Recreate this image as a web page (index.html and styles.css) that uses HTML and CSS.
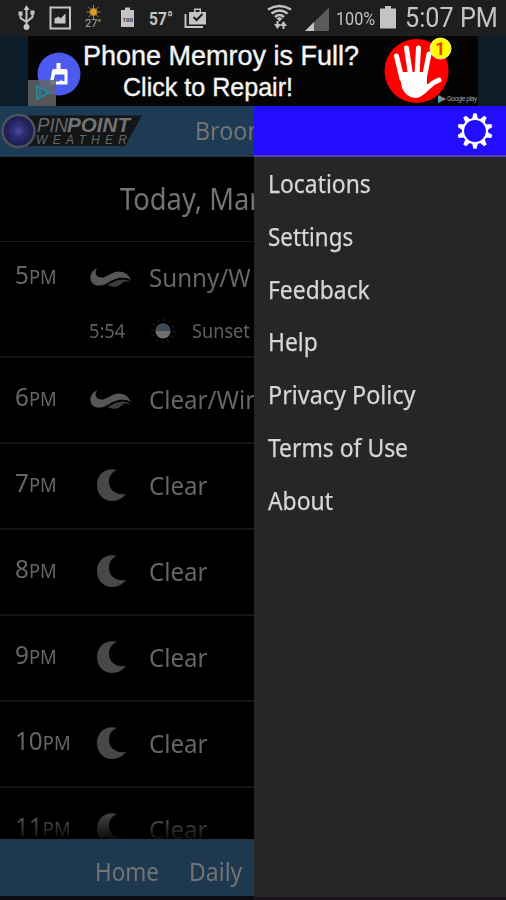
FILE: index.html
```html
<!DOCTYPE html>
<html lang="en">
<head>
<meta charset="utf-8">
<title>Pinpoint Weather</title>
<link rel="stylesheet" href="styles.css">
</head>
<body>
<svg width="0" height="0" class="defs">
  <defs>
    <symbol id="moon" viewBox="0 0 30 34"><path d="M21 2C10-1 1 6 1 17c0 10 7 16 15 16 6 0 11-3 14-7C19 28 12.500 21 13 13c0-5 3-9 8-11z" fill="#484848"/></symbol>
    <symbol id="wind" viewBox="0 0 44 22"><path d="M8.500 1C3 3 0 9 2 14c3 6 10 6 17 2 8-5 13-6 18-5 3 0 5 1 6 3-2-8-10-11-17-9-6 2-10 7-16 5-4-2-4-6-1.500-9z" fill="#575757"/><path d="M19 18c5-2 8-5 13-5 4-1 8 0 11 3-4-2-6-2-9 0-5 5-11 5-15 2z" fill="#3d3d3d"/></symbol>
  </defs>
</svg>
<div class="screen">
  <header class="status">
    <svg class="status-icons" width="220" height="36" viewBox="0 0 220 36" fill="none" stroke="#c4c4c4" stroke-width="2">
      <path d="M26.500 26V9M20.500 14v4l6 4 6-5v-5"/><path d="M26.500 5l-3 5h6z" fill="#c4c4c4" stroke="none"/><circle cx="26.500" cy="27" r="3" fill="#c4c4c4" stroke="none"/><path d="M18.500 11.500h4v4h-4zM30.500 10.500h4v4h-4z" fill="#c4c4c4" stroke="none"/>
      <path d="M50.500 7.500h19.500v21H50.500z"/><path d="M54.500 23.500v-5l4-2 2 2 5-5v10z" fill="#c4c4c4" stroke="none"/>
      <g stroke="#a8813f" stroke-width="1"><path d="M93.500 5v14M86.500 12h14M88.500 7l10 10M98.500 7l-10 10"/><circle cx="93.500" cy="12" r="3.500" fill="#e59a20"/></g>
      <text class="tiny-temp" x="85" y="27">27°</text>
      <path d="M121 10h4V7.500h5V10h4v17h-13z" fill="#c4c4c4" stroke="none"/><text class="battery-label" x="122.500" y="21.500">100</text>
      <text class="outside-temp" x="149" y="24.500" textLength="24" lengthAdjust="spacingAndGlyphs">57°</text>
      <path d="M185.500 14v13H203"/><path d="M189 12h5V8.500h7V12h5v12.500h-17z" fill="#c4c4c4" stroke="none"/><path d="M195.500 10h4v2h-4z" fill="#1e1e1e" stroke="none"/><path d="M193.500 17l3 3 6-6" stroke="#1e1e1e"/>
    </svg>
    <svg class="signal-icons" width="65" height="36" viewBox="0 0 65 36" fill="none" stroke="#c4c4c4" stroke-width="2.500">
      <path d="M2 9.500q11.500-7 23 0M5.500 13.500q8-6 16 0M9 17q4.500-4 9 0"/><path d="M10.500 18.500l3-1.500 3 1.500-3 3z" fill="#c4c4c4" stroke="none"/><path d="M8 24h2.500v-3h2v3H15l-3.500 5zM14 26l3.500-5 3.500 5h-2.500v3h-2v-3z" fill="#c4c4c4" stroke="none"/>
      <path d="M39 31L63 7.500V31z" fill="#5a5a5a" stroke="none"/><path d="M39 31l9-9v9z" fill="#c4c4c4" stroke="none"/>
    </svg>
    <span class="percent">100%</span>
    <svg class="battery" width="17" height="36" viewBox="0 0 17 36"><path d="M0 8.500h5V6h6v2.500h5v20H0z" fill="#c4c4c4"/></svg>
    <span class="clock">5:07 PM</span>
  </header>

  <section class="ad">
    <div class="ad-banner">
      <svg width="450" height="70" viewBox="0 0 450 70">
        <circle cx="31" cy="38" r="21.500" fill="#4d5af0"/>
        <path d="M28.500 33v-6h4v6h5q2 0 2 2v13.500H21.500L24 35q0-2 2-2z" fill="#fff"/><path d="M27 38.500h9.500V45h-3v-2l-2 2.500h-6z" fill="#4d5af0"/>
        <path d="M0 44h28v26H0z" fill="#626466" opacity=".85"/><path d="M9 50l12 6.500L9 63zM12 54v6" fill="none" stroke="#24859b" stroke-width="2"/>
        <circle cx="388.500" cy="35" r="32" fill="#f00"/>
        <g stroke="#fff" stroke-linecap="round" fill="none"><path d="M368.500 20l5.500 23M378.500 12l4 27M390.500 12l-1.500 27M401 18l-5 25" stroke-width="5"/><path d="M411 44l-6 3-10 9" stroke-width="5"/></g>
        <path d="M371 36h28v12l3 1-6 9q-4 4-9 4-9-1-13-10z" fill="#fff"/>
        <circle cx="412.500" cy="12.500" r="10.500" fill="#ff0" stroke="#f6f6a0"/><text class="badge-number" x="407" y="19">1</text>
        <path d="M410 59l8 4-8 4z" fill="#45a7a8"/><path d="M412 60l6 3-4 2z" fill="#bf6464"/><text class="play-label" x="419" y="65" textLength="30">Google play</text>
        <text class="ad-title" x="55" y="29" textLength="276" lengthAdjust="spacingAndGlyphs">Phone Memroy is Full?</text>
        <text class="ad-subtitle" x="95" y="60" textLength="170" lengthAdjust="spacingAndGlyphs">Click to Repair!</text>
      </svg>
    </div>
  </section>

  <div class="body">
    <main class="forecast">
      <div class="titlebar">
        <svg width="142" height="50" viewBox="0 0 142 50">
          <defs><radialGradient id="orb"><stop offset="0" stop-color="#4b4ba6"/><stop offset=".4" stop-color="#2c2c70"/><stop offset="1" stop-color="#1a1a4c"/></radialGradient></defs>
          <path d="M28 9.500h114L125 40H28z" fill="#131517"/>
          <circle cx="18.500" cy="25" r="16" fill="url(#orb)" stroke="#4e5359" stroke-width="2.500"/>
          <circle cx="18.500" cy="25" r="8" fill="none" stroke="#34346f"/>
          <text class="logo-pin" x="37" y="26" textLength="31" lengthAdjust="spacingAndGlyphs">PIN</text>
          <text class="logo-point" x="67" y="26" textLength="63" lengthAdjust="spacingAndGlyphs">POINT</text>
          <text class="logo-weather" x="36" y="38" textLength="91">WEATHER</text>
        </svg>
        <span class="city">Broom</span>
      </div>
      <h1 class="day"><span>Today, Mar</span></h1>
      <div class="hours">
        <div class="hour sunny"><span class="time">5<small>PM</small></span><svg class="wind"><use href="#wind"/></svg><span class="label">Sunny/W</span>
          <div class="event"><span class="event-time">5:54</span><svg class="sun" width="28" height="28" viewBox="0 0 28 28"><circle cx="14" cy="14" r="11" fill="none" stroke="#13191d" stroke-width="3" stroke-dasharray="1.500 4.260"/><circle cx="14" cy="14" r="7.500" fill="#707070"/><path d="M6.500 14a7.500 7.500 0 0 1 15 0z" fill="#3c4a57"/></svg><span class="event-name">Sunset</span></div>
        </div>
        <div class="hour"><span class="time">6<small>PM</small></span><svg class="wind"><use href="#wind"/></svg><span class="label">Clear/Win</span></div>
        <div class="hour"><span class="time">7<small>PM</small></span><svg class="moon"><use href="#moon"/></svg><span class="label">Clear</span></div>
        <div class="hour"><span class="time">8<small>PM</small></span><svg class="moon"><use href="#moon"/></svg><span class="label">Clear</span></div>
        <div class="hour"><span class="time">9<small>PM</small></span><svg class="moon"><use href="#moon"/></svg><span class="label">Clear</span></div>
        <div class="hour"><span class="time">10<small>PM</small></span><svg class="moon"><use href="#moon"/></svg><span class="label">Clear</span></div>
        <div class="hour last"><span class="time">11<small>PM</small></span><svg class="moon"><use href="#moon"/></svg><span class="label">Clear</span></div>
      </div>
      <nav class="tabs"><span class="home">Home</span><span class="daily">Daily</span></nav>
    </main>
    <aside class="drawer">
      <div class="drawer-head">
        <svg width="36" height="36" viewBox="-18 -18 36 36" fill="none" stroke="#fff">
          <circle r="12" stroke-width="2.200"/>
          <g fill="#fff" stroke="none">
            <path id="tooth" d="M-3-12l1.400-5.700h3.200L3-12z"/>
            <use href="#tooth" transform="rotate(36)"/><use href="#tooth" transform="rotate(72)"/><use href="#tooth" transform="rotate(108)"/><use href="#tooth" transform="rotate(144)"/><use href="#tooth" transform="rotate(180)"/><use href="#tooth" transform="rotate(216)"/><use href="#tooth" transform="rotate(252)"/><use href="#tooth" transform="rotate(288)"/><use href="#tooth" transform="rotate(324)"/>
          </g>
        </svg>
      </div>
      <ul class="menu">
        <li><span>Locations</span></li>
        <li><span class="settings">Settings</span></li>
        <li><span>Feedback</span></li>
        <li><span>Help</span></li>
        <li><span class="privacy">Privacy Policy</span></li>
        <li><span>Terms of Use</span></li>
        <li><span>About</span></li>
      </ul>
    </aside>
  </div>
</div>
</body>
</html>
```
FILE: styles.css
```css
* { box-sizing: border-box; }
body { margin: 0; background: #000; font-family: "Noto Sans", sans-serif; }
svg { display: block; flex: none; }
span { white-space: nowrap; transform-origin: left; }
.defs { position: absolute; }
.screen { width: 506px; height: 900px; overflow: hidden; display: flex; flex-direction: column; }

.status { height: 36px; flex: none; display: flex; align-items: center; background: #1e1e1e; color: #c4c4c4; font-family: Roboto, sans-serif; }
.status-icons { width: 220px; }
.signal-icons { margin-left: 46px; }
.tiny-temp { font-size: 11px; fill: #aaa; stroke: none; }
.battery-label { font-size: 6px; font-weight: 700; fill: #333; stroke: none; }
.outside-temp { font: 700 18px Roboto, sans-serif; fill: #c4c4c4; stroke: none; }
.percent { width: 45px; margin-left: 5px; font-size: 18px; transform: scaleX(.9); }
.battery { margin-left: -1px; }
.clock { margin-left: 8px; font-size: 27px; line-height: 36px; transform: scaleX(.935); }

.ad { height: 70px; flex: none; display: flex; justify-content: center; background: #0c1c29; }
.ad-banner { width: 450px; background: #040404; }
.ad-title, .ad-subtitle { font-family: "Liberation Sans", sans-serif; font-size: 27px; fill: #f4f4f4; stroke: #f4f4f4; stroke-width: .4; }
.ad-subtitle { font-size: 25px; }
.badge-number { font: 700 18px Roboto, sans-serif; fill: #f33b00; }
.play-label { font: 7px Roboto, sans-serif; fill: #999; }

.body { display: flex; flex: 1; min-height: 0; }
.forecast { width: 254px; display: flex; flex-direction: column; overflow: hidden; color: #737373; }
.titlebar { height: 51px; flex: none; display: flex; background: #1e3b55; border-bottom: 1px solid #253440; }
.logo-pin, .logo-point { font: italic 20px "Liberation Sans", sans-serif; fill: #65686b; }
.logo-point { font-weight: 700; fill: #707376; }
.logo-weather { font: italic 12px "Liberation Sans", sans-serif; fill: #65686b; }
.city { margin-left: 53px; font-size: 25px; line-height: 49px; transform: scaleX(.93); }
.day { margin: 0; height: 85px; flex: none; padding-left: 120px; font-size: 30px; font-weight: 400; line-height: 83px; border-bottom: 1px solid #191919; white-space: nowrap; }
.day span { display: inline-block; transform: scaleX(.91); }
.hours { flex: 1; min-height: 0; overflow: hidden; display: flex; flex-direction: column; }
.hour { height: 86px; flex: none; display: grid; grid-template-columns: 74px 60px 1fr; grid-template-rows: 30px 1fr; padding: 26px 0 0 15px; border-bottom: 2px solid #141414; font-size: 25px; line-height: 30px; color: #666; }
.hour.sunny { height: 116px; padding-top: 20px; }
.time { margin-top: -3px; transform: scaleX(.97); }
.time small { font-size: 19px; }
.label { transform: scaleX(.965); }
.wind { width: 43px; height: 22px; margin-top: 5px; }
.moon { width: 30px; height: 34px; margin: -2px 0 0 7px; }
.event { grid-column: 2 / 4; display: flex; align-items: center; height: 30px; margin-top: 24px; font-size: 19px; color: #606060; }
.event-time { width: 60px; transform: scaleX(.96); }
.event-name { margin-left: 15px; transform: scaleX(.955); }
.last { border: 0; -webkit-mask-image: linear-gradient(#000 24px, rgba(0, 0, 0, .1) 52px); mask-image: linear-gradient(#000 24px, rgba(0, 0, 0, .1) 52px); }
.tabs { height: 61px; flex: none; display: flex; padding-left: 95px; gap: 25px; background: #1e3850; border-top: 1px solid #263442; border-bottom: 4px solid #0b0c11; font-size: 25px; line-height: 63px; }
.home { transform: scaleX(.9); margin-right: -2px; }
.daily { transform: scaleX(.92); }

.drawer { flex: 1; background: #262626; border-bottom: 3px solid #171319; }
.drawer-head { height: 51px; display: flex; justify-content: flex-end; padding: 7px 13px 0 0; background: #230dff; border-bottom: 2px solid #5545bd; }
.menu { margin: 0; padding: 0 0 0 14px; list-style: none; }
.menu li { height: 52.750px; font-size: 25px; line-height: 52px; color: #d6d6d6; -webkit-text-stroke: .25px #d6d6d6; }
.menu span { display: inline-block; transform: scaleX(.915); }
.menu .settings { transform: scaleX(.895); }
.menu .privacy { transform: scaleX(.935); }
```
